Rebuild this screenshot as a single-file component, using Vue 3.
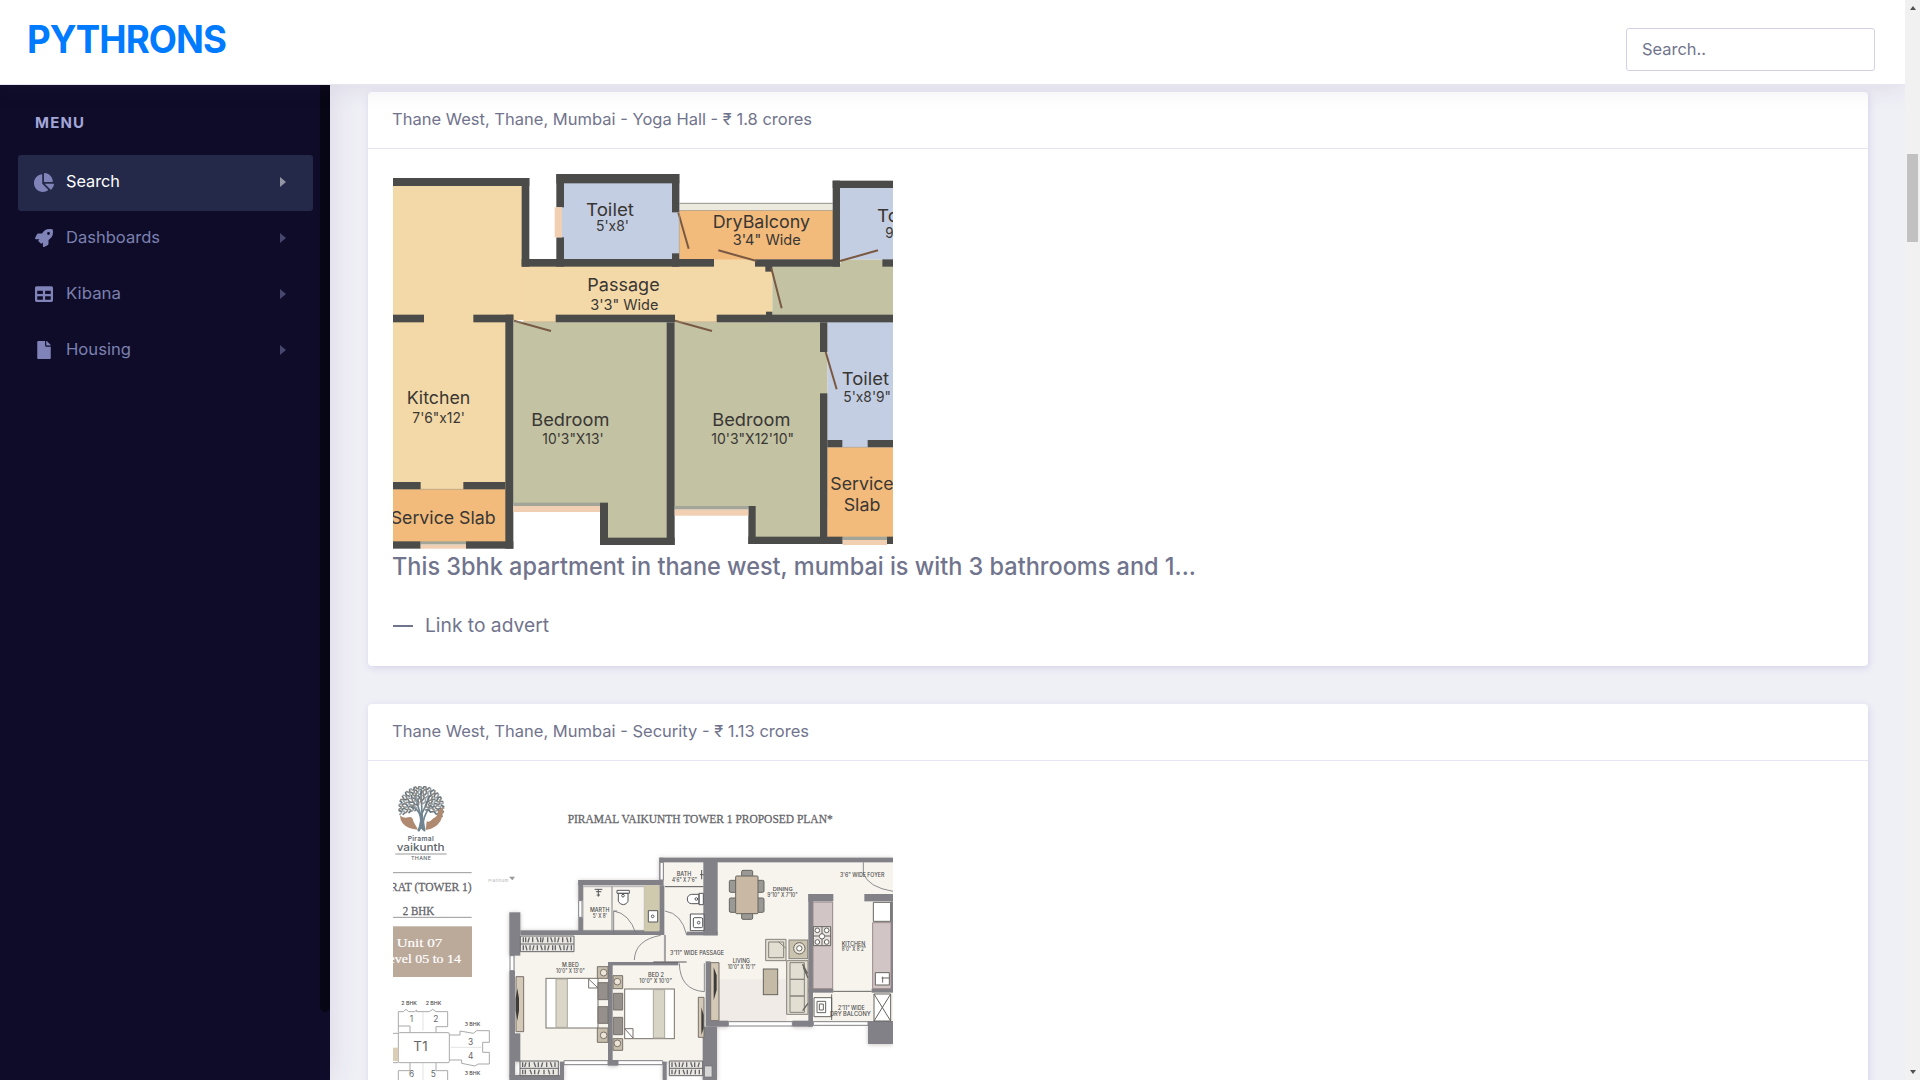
<script setup>
const menu = [
  { label: 'Search', icon: 'pie', active: true, width: 54 },
  { label: 'Dashboards', icon: 'rocket', width: 94 },
  { label: 'Kibana', icon: 'table', width: 55 },
  { label: 'Housing', icon: 'file', width: 65 }
]

// Apartment plan, rectangles as [x, y, right, bottom]
const cream = [[39, 66, 436, 480], [39, 470, 380, 990], [430, 310, 1177, 487], [1002, 298, 1125, 330]]
const blue = [[545, 60, 898, 300], [1375, 78, 1539, 299], [1342, 480, 1539, 862]]
const orange = [[898, 152, 1362, 299], [1342, 862, 1539, 1135], [39, 988, 380, 1146]]
const olive = [[1177, 310, 1539, 475], [1382, 299, 1508, 330], [400, 487, 864, 1030], [680, 1020, 864, 1137], [884, 487, 1342, 1040], [1122, 1030, 1325, 1135]]
const walls = [
  [39, 54, 448, 78], [425, 54, 448, 320], [425, 297, 1002, 320], [529, 42, 552, 142], [529, 232, 552, 320],
  [529, 42, 898, 70], [876, 42, 898, 157], [876, 280, 898, 320], [1125, 298, 1380, 320], [1358, 62, 1380, 320],
  [1358, 62, 1539, 84], [1507, 298, 1539, 320], [1156, 318, 1177, 335], [1158, 455, 1177, 470],
  [39, 464, 132, 487], [280, 464, 400, 487], [527, 464, 885, 487], [1010, 464, 1539, 487],
  [376, 464, 400, 1166], [860, 487, 884, 1155], [1320, 487, 1342, 576], [1320, 700, 1342, 1150],
  [39, 966, 122, 988], [250, 966, 376, 988], [39, 1144, 122, 1166], [258, 1144, 400, 1166],
  [1342, 840, 1387, 862], [1463, 840, 1539, 862], [1105, 1130, 1388, 1152], [1521, 1130, 1539, 1152],
  [660, 1028, 684, 1155], [660, 1133, 884, 1155], [1105, 1038, 1127, 1152]
]
const peach = [[524, 142, 546, 232], [400, 1038, 660, 1056], [884, 1048, 1105, 1067], [122, 1153, 258, 1166], [1388, 1140, 1521, 1155]]
const panes = [[400, 1028, 660, 1038], [884, 1038, 1105, 1048], [122, 1144, 258, 1153], [1388, 1130, 1521, 1140]]
const doors = ['M895 158L926 266', 'M1015 271L1130 303', 'M1380 303L1494 271', 'M1174 325L1205 445', 'M402 482L513 513', 'M885 482L996 513', 'M1337 576L1370 688']
const planLabels = [
  ['Toilet', 618, 167, 144, 53], ["5'x8'", 648, 214, 99, 44], ['DryBalcony', 998, 205, 292, 52], ['3\'4" Wide', 1058, 255, 204, 43],
  ['Passage', 622, 394, 217, 53], ['3\'3" Wide', 631, 451, 204, 43], ['Kitchen', 80, 731, 191, 53], ['7\'6"x12\'', 97, 788, 158, 44],
  ['Bedroom', 454, 799, 234, 53], ['10\'3"X13\'', 487, 853, 184, 44], ['Bedroom', 997, 799, 234, 53], ['10\'3"X12\'10"', 994, 853, 248, 44],
  ['Toilet', 1385, 676, 142, 53], ['5\'x8\'9"', 1390, 726, 143, 44], ['Service Slab', 32, 1093, 315, 53], ['Service', 1351, 990, 190, 52],
  ['Slab', 1391, 1053, 110, 52], ['Toilet', 1491, 185, 144, 53], ["9'x5'", 1516, 233, 96, 44]
]

// Tower plan
const floor = [[600, 375, 850, 530], [405, 520, 850, 905], [700, 615, 985, 905], [850, 305, 975, 620], [1010, 305, 1539, 785], [970, 520, 1020, 620]]
const grayWalls = [
  [388, 457, 421, 587], [388, 632, 405, 950], [405, 820, 421, 905], [595, 360, 850, 376], [595, 360, 609, 422], [595, 472, 609, 525],
  [421, 511, 850, 525], [838, 293, 850, 376], [838, 293, 1539, 307], [838, 376, 853, 525], [970, 305, 1013, 526], [920, 515, 1013, 526],
  [684, 606, 698, 912], [684, 606, 895, 616], [977, 604, 992, 785], [977, 782, 1045, 800], [968, 800, 1011, 960], [1237, 782, 1295, 800],
  [1285, 402, 1360, 424], [1285, 402, 1299, 800], [1453, 402, 1539, 424], [1532, 424, 1539, 690], [1285, 686, 1360, 698],
  [1475, 686, 1539, 698], [1464, 783, 1539, 852], [388, 945, 550, 960], [540, 905, 552, 960], [848, 905, 860, 960], [684, 900, 714, 917]
]
const chairs = [[1085, 331, 1118, 351], [1085, 457, 1118, 478], [1048, 361, 1070, 397], [1048, 414, 1070, 457], [1130, 361, 1152, 397], [1130, 414, 1152, 457]]
const towerLabels = [
  ['MARTH', 630, 455, 58, 17], ["5' X 8'", 638, 473, 43, 17], ["3'11\" WIDE PASSAGE", 870, 584, 162, 17], ['BATH', 890, 349, 44, 17], ["4'6\" X 7'6\"", 876, 365, 75, 17],
  ['DINING', 1178, 393, 60, 16], ["9'10\" X 7'10\"", 1162, 411, 91, 17], ["3'6\" WIDE FOYER", 1380, 352, 133, 17],
  ['M.BED', 546, 621, 50, 17], ["10'0\" X 13'0\"", 528, 638, 86, 17], ['BED 2', 804, 651, 48, 17], ["10'0\" X 10'0\"", 778, 669, 98, 17],
  ['LIVING', 1058, 610, 52, 17], ["10'0\" X 15'1\"", 1043, 627, 84, 17], ['KITCHEN', 1385, 557, 71, 17], ["8'0\" X 8'2\"", 1385, 573, 73, 17],
  ["2'11\" WIDE", 1374, 750, 80, 17], ['DRY BALCONY', 1350, 768, 122, 17], ['2 BHK', 64, 734, 47, 14], ['2 BHK', 137, 734, 47, 14],
  ['3 BHK', 254, 797, 47, 14], ['3 BHK', 254, 944, 47, 14]
]
const leaves = []
for (let ring = 0; ring < 6; ring++) {
  const count = 9 + ring * 5
  for (let i = 0; i < count; i++) {
    const a = Math.PI * (0.9 + (1.2 * i) / (count - 1)) + (ring % 2) * 0.05
    const r = 17 + ring * 9
    leaves.push([124 + Math.cos(a) * r * 1.03, 144 + Math.sin(a) * r, (a * 180) / Math.PI + (i % 2 ? 28 : -28), (i + ring) % 4])
  }
}
const leafColor = ['#777c80', '#9ba1a4', '#64757e', '#8c8881']
</script>

<template>
  <div class="page">
    <header class="topbar">
      <a class="brand"><svg width="206" height="54"><text x="0" y="42" textLength="199" lengthAdjust="spacingAndGlyphs">PYTHRONS</text></svg></a>
      <div class="search"><svg width="66" height="24"><text x="0" y="17" textLength="64" lengthAdjust="spacingAndGlyphs">Search..</text></svg></div>
    </header>
    <div class="body">
      <aside class="sidebar">
        <div class="rail"></div>
        <div class="menu-title"><svg width="50" height="20"><text x="-1" y="15" textLength="49">MENU</text></svg></div>
        <nav>
          <a v-for="m in menu" :key="m.label" class="item" :class="{ active: m.active }">
            <svg v-if="m.icon === 'pie'" class="icon" viewBox="0 0 544 512"><path d="M527.79 288H290.500l158.030 158.030c6.040 6.040 15.980 6.530 22.190.68 38.700-36.460 65.320-85.560 73.130-140.860 1.340-9.460-6.510-17.850-16.060-17.850zm-15.830-64.800C503.720 103.740 408.260 8.280 288.800.04 279.680-.59 272 7.100 272 16.240V240h223.770c9.140 0 16.820-7.680 16.190-16.800zM224 288V50.710c0-9.550-8.390-17.400-17.840-16.060C86.990 51.490-4.100 155.600.14 280.370 4.500 408.510 114.830 513.590 243.030 511.980c50.400-.63 96.970-16.870 135.260-44.030 7.900-5.600 8.420-17.230 1.570-24.080L224 288z" /></svg>
            <svg v-else-if="m.icon === 'rocket'" class="icon" viewBox="0 0 512 512"><path fill-rule="evenodd" d="M505 19c-2-8-5-10-12-12-32-7-57-7-82-7-103 0-165 55-211 128H95c-16 0-35 12-43 26L3 253c-8 16 2 35 21 35h104l-23 23c-13 12-13 33 0 45l51 51c12 13 33 13 45 0l23-23v104c0 18 18 31 36 22l99-50c14-7 25-26 25-42V312c73-46 128-108 128-211 0-25 0-50-7-82zM384 168a40 40 0 1 1 0-80 40 40 0 0 1 0 80z" /></svg>
            <svg v-else-if="m.icon === 'table'" class="icon" viewBox="0 0 512 512"><path fill-rule="evenodd" d="M464 32H48C21 32 0 53 0 80v352c0 27 21 48 48 48h416c27 0 48-21 48-48V80c0-27-21-48-48-48zM224 416H64v-96h160v96zm0-160H64v-96h160v96zm224 160H288v-96h160v96zm0-160H288v-96h160v96z" /></svg>
            <svg v-else class="icon" viewBox="-64 0 512 512"><path d="M224 136V0H24C11 0 0 11 0 24v464c0 13 11 24 24 24h336c13 0 24-11 24-24V160H248c-13 0-24-11-24-24zm160-14v6H256V0h6c6 0 12 3 17 7l98 98c4 4 7 10 7 17z" /></svg>
            <svg class="label" width="110" height="24"><text x="0" y="17" :textLength="m.width" lengthAdjust="spacingAndGlyphs">{{ m.label }}</text></svg>
            <i class="caret"></i>
          </a>
        </nav>
      </aside>
      <main class="content">
        <article class="card">
          <h5 class="card-header"><svg width="600" height="24"><text x="-1" y="18" textLength="420" lengthAdjust="spacingAndGlyphs">Thane West, Thane, Mumbai - Yoga Hall - ₹ 1.8 crores</text></svg></h5>
          <div class="card-body">
            <svg class="plan sans" viewBox="39 42 1500 1125" width="500" height="375">
              <rect x="39" y="42" width="1500" height="1125" fill="#fff" />
              <rect x="898" y="130" width="460" height="22" fill="#ece9de" />
              <path d="M898 130H1358M898 152H1358" stroke="#92928a" stroke-width="3" />
              <g fill="#f4d9a8"><rect v-for="(r, i) in cream" :key="i" :x="r[0]" :y="r[1]" :width="r[2] - r[0]" :height="r[3] - r[1]" /></g>
              <g fill="#c4cee2"><rect v-for="(r, i) in blue" :key="i" :x="r[0]" :y="r[1]" :width="r[2] - r[0]" :height="r[3] - r[1]" /></g>
              <g fill="#f2ba7b"><rect v-for="(r, i) in orange" :key="i" :x="r[0]" :y="r[1]" :width="r[2] - r[0]" :height="r[3] - r[1]" /></g>
              <g fill="#c3c2a3"><rect v-for="(r, i) in olive" :key="i" :x="r[0]" :y="r[1]" :width="r[2] - r[0]" :height="r[3] - r[1]" /></g>
              <g fill="#4b4b49"><rect v-for="(r, i) in walls" :key="i" :x="r[0]" :y="r[1]" :width="r[2] - r[0]" :height="r[3] - r[1]" /></g>
              <g fill="#f1cfb2"><rect v-for="(r, i) in peach" :key="i" :x="r[0]" :y="r[1]" :width="r[2] - r[0]" :height="r[3] - r[1]" /></g>
              <g fill="#a3a599"><rect v-for="(r, i) in panes" :key="i" :x="r[0]" :y="r[1]" :width="r[2] - r[0]" :height="r[3] - r[1]" /></g>
              <path v-for="d in doors" :key="d" :d="d" stroke="#7a5942" stroke-width="6" />
              <path d="M400 486H527M885 486H1010M1387 862H1463M122 988H250M898 157V282" stroke="#a89982" stroke-width="2" />
              <g fill="#393734"><text v-for="(t, i) in planLabels" :key="i" :x="t[1]" :y="t[2]" :textLength="t[3]" :font-size="t[4]" lengthAdjust="spacingAndGlyphs">{{ t[0] }}</text></g>
            </svg>
            <svg class="lead" width="830" height="36"><text x="-1" y="26" textLength="804" lengthAdjust="spacingAndGlyphs">This 3bhk apartment in thane west, mumbai is with 3 bathrooms and 1...</text></svg>
            <div class="advert"><span></span><svg width="130" height="28"><text x="0" y="21" textLength="124" lengthAdjust="spacingAndGlyphs">Link to advert</text></svg></div>
          </div>
        </article>

        <article class="card">
          <h5 class="card-header"><svg width="600" height="24"><text x="-1" y="18" textLength="417" lengthAdjust="spacingAndGlyphs">Thane West, Thane, Mumbai - Security - ₹ 1.13 crores</text></svg></h5>
          <div class="card-body">
            <svg class="plan" viewBox="39 78 1500 1125" width="500" height="375">
              <defs><filter id="shade" x="-5%" y="-5%" width="110%" height="110%"><feDropShadow dx="0" dy="2" stdDeviation="7" flood-color="#9a928a" flood-opacity=".55" /></filter></defs>
              <!-- Emblem -->
              <g stroke="#708591" fill="none" stroke-linecap="round">
                <path d="M118 211Q127 180 118 160Q105 140 88 133M123 205Q128 175 123 95M128 208Q126 170 155 132M122 165Q112 130 104 107M126 160Q140 135 148 108" stroke-width="5" />
                <path d="M116 211Q126 188 124 158Q130 190 133 211" stroke-width="7" />
              </g>
              <rect v-for="(l, i) in leaves" :key="i" :x="l[0] - 6" :y="l[1] - 2.500" width="12" height="5" rx="2" :fill="leafColor[l[3]]" :transform="`rotate(${l[2]} ${l[0]} ${l[1]})`" />
              <path d="M60 166Q68 176 85 172Q98 168 100 184L114 209Q82 208 68 190Q60 180 60 166ZM189 140Q190 165 181 184Q167 206 137 210L140 184Q150 188 160 175Q173 169 175 152Z" fill="#b08a70" />
              <g class="sans" fill="#60666c">
                <text x="83" y="242" textLength="78" font-size="20" font-weight="600">Piramal</text>
                <text x="50" y="273" textLength="144" font-size="32" font-weight="500" lengthAdjust="spacingAndGlyphs">vaikunth</text>
                <text x="93" y="301" textLength="60" font-size="16" font-weight="500">THANE</text>
              </g>
              <path d="M46 282H200M39 338H275M39 472H275" stroke="#999" stroke-width="3" />
              <g class="serif" fill="#646469" stroke="#646469" stroke-width=".8">
                <text x="-20" y="392" textLength="295" font-size="36" lengthAdjust="spacingAndGlyphs">AARAT (TOWER 1)</text>
                <text x="68" y="465" textLength="95" font-size="36" lengthAdjust="spacingAndGlyphs">2 BHK</text>
                <text x="563" y="188" textLength="795" font-size="36" lengthAdjust="spacingAndGlyphs">PIRAMAL VAIKUNTH TOWER 1 PROPOSED PLAN*</text>
              </g>
              <rect x="39" y="499" width="237" height="152" fill="#bba99a" />
              <g class="serif" fill="#fff" stroke="#fff" stroke-width=".6">
                <text x="50" y="561" textLength="137" font-size="40" lengthAdjust="spacingAndGlyphs">Unit 07</text>
                <text x="0" y="608" textLength="243" font-size="38" lengthAdjust="spacingAndGlyphs">Level 05 to 14</text>
              </g>
              <text class="sans" x="325" y="365" textLength="60" font-size="12" fill="#aaa">Platinum</text><path d="M387 350H405L397 361Z" fill="#999" />
              <!-- Key plan -->
              <g fill="none" stroke="#a9a9a9" stroke-width="3">
                <rect x="55" y="818" width="153" height="90" rx="4" />
                <path d="M55 818V755H70L78 748L86 755H104L110 750V755H148L158 748L168 755H203V800H168V818M90 818V798H55M208 825H240V813L280 820L290 812H328V847H308V877H328V912H294L285 918L245 910V900H208M55 960V932H90V908M168 908V932H203V960M39 820H55M39 908H55" />
                <path d="M129 755V812M213 862H305M129 908V960" stroke="#d4d4d4" stroke-width="2" />
              </g>
              <rect x="39" y="863" width="16" height="40" fill="#dacfb6" />
              <g class="sans" fill="#66666a" font-size="25">
                <text x="100" y="874" font-size="40" textLength="43">T1</text><text x="89" y="785">1</text><text x="160" y="785">2</text><text x="264" y="855">3</text><text x="264" y="898">4</text><text x="87" y="952">6</text><text x="152" y="952">5</text>
              </g>
              <!-- Apartment -->
              <g filter="url(#shade)">
                <g fill="#f7f4ee"><rect v-for="(r, i) in floor" :key="i" :x="r[0]" :y="r[1]" :width="r[2] - r[0]" :height="r[3] - r[1]" /></g>
                <path d="M992 658H1220V783H992Z" fill="#f1ebe7" />
                <g fill="#818187"><rect v-for="(r, i) in grayWalls" :key="i" :x="r[0]" :y="r[1]" :width="r[2] - r[0]" :height="r[3] - r[1]" /></g>
              </g>
              <g fill="#fff" stroke="#818187" stroke-width="3">
                <path d="M390 587H402V632H390ZM596 422H606V472H596ZM1045 785H1237V798H1045ZM1300 785H1464V796H1300ZM552 902H684V914H552ZM714 902H848V914H714ZM840 307H850V360H840Z" />
              </g>
              <g fill="#ebe8e2" stroke="#66666a" stroke-width="3">
                <path d="M421 528H582V575H421ZM421 552H582M420 903H535V947H420ZM868 903H968V947H868ZM868 925H968M420 925H535" />
                <path d="M430 532V547M437 532V547M448 532L444 547M458 532V547M470 532L475 547M482 532V547M490 532L487 547M503 532V547M512 532L517 547M525 532V547M537 532L533 547M548 532V547M560 532L564 547M572 532V547M430 556V571M437 556L441 571M450 556V571M462 556L458 571M472 556V571M482 556L487 571M495 556V571M507 556L503 571M518 556V571M526 556V571M538 556L543 571M552 556V571M564 556L560 571M574 556V571M428 907V921M438 907L434 921M448 907V921M462 907L467 921M475 907V921M488 907L484 921M500 907V921M511 907L516 921M525 907V921M428 929V943M436 929V943M450 929L455 943M464 929V943M478 929L474 943M492 929V943M505 929L509 943M520 929V943M876 907V921M885 907L889 921M898 907V921M910 907L906 921M920 907V921M932 907L937 921M944 907V921M958 907L954 921M876 929V943M888 929L884 943M898 929V943M909 929L914 943M922 929V943M935 929L931 943M946 929V943M958 929V943" fill="none" stroke-width="4" />
              </g>
              <rect x="974" y="918" width="22" height="33" fill="#d6d6d6" stroke="#727277" stroke-width="2" />
              <!-- Beds -->
              <g stroke="#77716b" stroke-width="3">
                <rect x="498" y="655" width="156" height="149" fill="#fff" /><path d="M528 657H562V802H528Z" fill="#dcd6c8" stroke="#aaa69c" />
                <path d="M626 657V684H654M626 657L654 684" fill="none" />
                <rect x="734" y="687" width="149" height="149" fill="#fff" /><path d="M820 689H854V834H820Z" fill="#d8d5c6" stroke="#aaa69c" /><path d="M734 806L759 834V806Z" fill="#fff" />
                <path d="M654 668H684V719H654ZM654 740H684V790H654ZM700 700H728V750H700ZM700 772H728V824H700Z" fill="#96908c" />
                <path d="M652 620H684V655H652ZM652 804H684V847H652ZM699 647H728V686H699ZM699 836H728V871H699Z" fill="#c7bdab" />
                <g fill="#eee5d6"><circle cx="671" cy="638" r="10" /><circle cx="671" cy="826" r="10" /><circle cx="712" cy="665" r="10" /><circle cx="712" cy="850" r="10" /></g>
                <path d="M408 650H431V815H408ZM955 712H972V832H955ZM992 608H1017V782H992Z" fill="#d4c8b6" />
              </g>
              <path d="M412 685L417 715V752L412 782L407 752V715ZM964 742L971 765V805L964 825ZM1001 622L1010 646V690L1001 721Z" fill="#3d3c3b" />
              <!-- Bathrooms -->
              <path d="M609 380H696V511H609ZM696 380H793V511H696Z" fill="none" stroke="#8e8e8e" stroke-width="2" />
              <path d="M793 376H838V514H793Z" fill="#cfc9ad" />
              <g fill="#fff" stroke="#57575a" stroke-width="3">
                <path d="M711 391H748V400H711ZM715 400H744V424Q739 434 730 434Q720 434 715 424ZM805 452H833V486H805ZM970 400V434H957V400ZM957 403H935Q922 405 922 417Q922 430 935 431H957ZM931 462H972V512H931Z" />
                <rect x="940" y="473" width="28" height="30" rx="4" /><circle cx="729" cy="407" r="4" /><circle cx="818" cy="469" r="4" /><circle cx="956" cy="488" r="4" /><circle cx="949" cy="417" r="4" />
                <path d="M644 388H667M648 395H664M655 388V410M650 405H660M965 330V358M960 344H971M855 380H970M855 525V605M820 606H920" fill="none" />
              </g>
              <g fill="none" stroke="#77777b" stroke-width="2.500">
                <path d="M701 525V453Q748 460 768 521M763 600Q765 540 842 526M855 453Q905 460 920 525M898 610Q900 690 973 695V610M1450 307V340Q1465 382 1539 394M701 453H712" />
              </g>
              <!-- Living and kitchen -->
              <g stroke="#66645f" stroke-width="3">
                <g fill="#9b9995"><rect v-for="(r, i) in chairs" :key="i" :x="r[0]" :y="r[1]" :width="r[2] - r[0]" :height="r[3] - r[1]" rx="4" /></g>
                <rect x="1067" y="348" width="67" height="113" rx="3" fill="#c9b9a4" />
                <path d="M1157 538H1218V602H1157ZM1166 546H1211V593H1166ZM1220 602H1284V763H1220ZM1230 608H1273V658H1230ZM1230 658H1273V708H1230ZM1230 708H1273V757H1230ZM1195 545L1218 565M1267 614L1283 642" fill="#e2ded2" stroke="#85827b" />
                <rect x="1227" y="540" width="56" height="56" fill="#c9c3af" stroke="#85827b" /><circle cx="1258" cy="565" r="17" fill="#eee9dd" /><circle cx="1258" cy="565" r="8" fill="#fff" />
                <path d="M1268 612L1282 640M1270 622L1284 654M1268 752L1284 730" stroke-width="4" fill="none" />
                <rect x="1150" y="627" width="43" height="77" fill="#c5baa6" />
                <path d="M1299 426H1358V686H1299ZM1478 488H1533V686H1478Z" fill="#d2c5c5" stroke="#98888a" />
                <path d="M1480 427H1532V484H1480ZM1486 638H1528V675H1486ZM1302 713H1355V770H1302ZM1311 724H1337V758H1311ZM1482 702H1532V783H1482Z" fill="#fff" />
                <path d="M1482 702L1532 783M1532 702L1482 783M1360 694H1475M1355 703V780M1505 654H1528M1508 650V668M1318 732H1330V750H1318Z" fill="none" />
                <path d="M1300 500H1352V557H1300ZM1326 500V557M1300 528H1352" fill="#e8e3e1" />
                <g fill="#fff"><circle cx="1312" cy="511" r="7" /><circle cx="1340" cy="511" r="7" /><circle cx="1312" cy="546" r="7" /><circle cx="1340" cy="546" r="7" /><circle cx="1326" cy="529" r="8" /></g>
              </g>
              <g class="sans" fill="#4a4a4a" font-weight="500"><text v-for="(t, i) in towerLabels" :key="i" :x="t[1]" :y="t[2]" :textLength="t[3]" :font-size="t[4]" lengthAdjust="spacingAndGlyphs">{{ t[0] }}</text></g>
            </svg>
          </div>
        </article>
      </main>
    </div>
    <div class="scrollbar"><i class="up"></i><i class="thumb"></i><i class="down"></i></div>
  </div>
</template>

<style>
body { margin: 0; overflow: hidden; }
</style>

<style scoped>
.page { position: relative; width: 1920px; height: 1080px; overflow: hidden; display: flex; flex-direction: column; background: #efeff6; color: #71748d; font-family: Inter, "Liberation Sans", sans-serif; }
svg { display: block; overflow: visible; }
.topbar { position: relative; z-index: 3; flex: none; width: 1905px; height: 85px; box-sizing: border-box; border-bottom: 1px solid #e6e6f2; background: #fff; display: flex; justify-content: space-between; align-items: flex-start; padding: 0 30px 0 27px; box-shadow: 0 0 28px rgba(82, 63, 105, .13); }
.brand { padding-top: 11px; }
.brand text { font-size: 38px; font-weight: 700; letter-spacing: -1px; fill: #007bff; }
.search { width: 249px; height: 43px; margin-top: 28px; box-sizing: border-box; border: 1px solid #d2d2e4; border-radius: 3px; padding: 9px 15px; }
.search text { font-size: 16.500px; fill: #71748d; }
.body { flex: 1; min-height: 0; display: flex; width: 1905px; }
.sidebar { position: relative; z-index: 2; flex: none; width: 330px; box-sizing: border-box; background: #0e0c28; padding: 22px 17px 0 18px; box-shadow: 0 0 28px rgba(82, 63, 105, .13); }
.rail { position: absolute; right: 0; top: 0; width: 10px; height: 927px; border-radius: 0 0 5px 5px; background: #070614; }
.menu-title { height: 48px; padding: 6px 0 0 18px; box-sizing: border-box; }
.menu-title text { font-size: 15px; font-weight: 700; fill: #a3a6d9; }
.item { display: flex; align-items: center; height: 56px; box-sizing: border-box; padding: 0 27px 2px 15px; border-radius: 3px; }
.item.active { background: #242849; }
.icon { width: 18px; height: 18px; margin-left: 2px; fill: #8083b8; }
.active .icon { width: 20px; height: 19px; margin: 0 -1px 0 1px; }
.label { margin-left: 13px; flex: 1; }
.label text { font-size: 16.500px; fill: #7c80b0; }
.active .label text { fill: #fff; }
.caret { width: 0; height: 0; border: solid transparent; border-width: 5.500px 0 5.500px 6px; border-left-color: #45476f; }
.active .caret { border-left-color: #9294a4; }
.content { flex: 1; min-width: 0; display: flex; flex-direction: column; gap: 38px; padding: 7px 37px 0 38px; }
.card { flex: none; background: #fff; border-radius: 4px; box-shadow: 1px 2px 6px rgba(154, 151, 210, .3); }
.card-header { height: 57px; box-sizing: border-box; margin: 0; border-bottom: 1px solid #e6e6f2; padding: 15px 25px; font-weight: 400; }
.card-header text { font-size: 16.500px; fill: #71748d; }
.card-body { padding: 25px 25px 27px; }
.plan { overflow: hidden; }
.sans { font-family: Inter, "Liberation Sans", sans-serif; }
.serif { font-family: "Liberation Serif", serif; }
.lead text { font-size: 24.500px; font-weight: 500; fill: #71748d; }
.advert { display: flex; align-items: center; gap: 12px; height: 28px; margin-top: 26px; }
.advert span { width: 20px; height: 1.500px; margin: 2px 0 0; background: #71748d; }
.advert text { font-size: 19px; fill: #71748d; }
.scrollbar { position: absolute; z-index: 4; right: 0; top: 0; width: 15px; height: 1080px; box-sizing: border-box; padding: 6px 2px 6px; background: #f1f1f1; display: flex; flex-direction: column; align-items: center; }
.up, .down { border: solid transparent; width: 0; height: 0; }
.up { border-width: 0 3.500px 4px; border-bottom-color: #505050; }
.down { border-width: 4px 3.500px 0; border-top-color: #505050; margin-top: auto; }
.thumb { width: 11px; height: 88px; margin-top: 144px; background: #c1c1c1; }
</style>
